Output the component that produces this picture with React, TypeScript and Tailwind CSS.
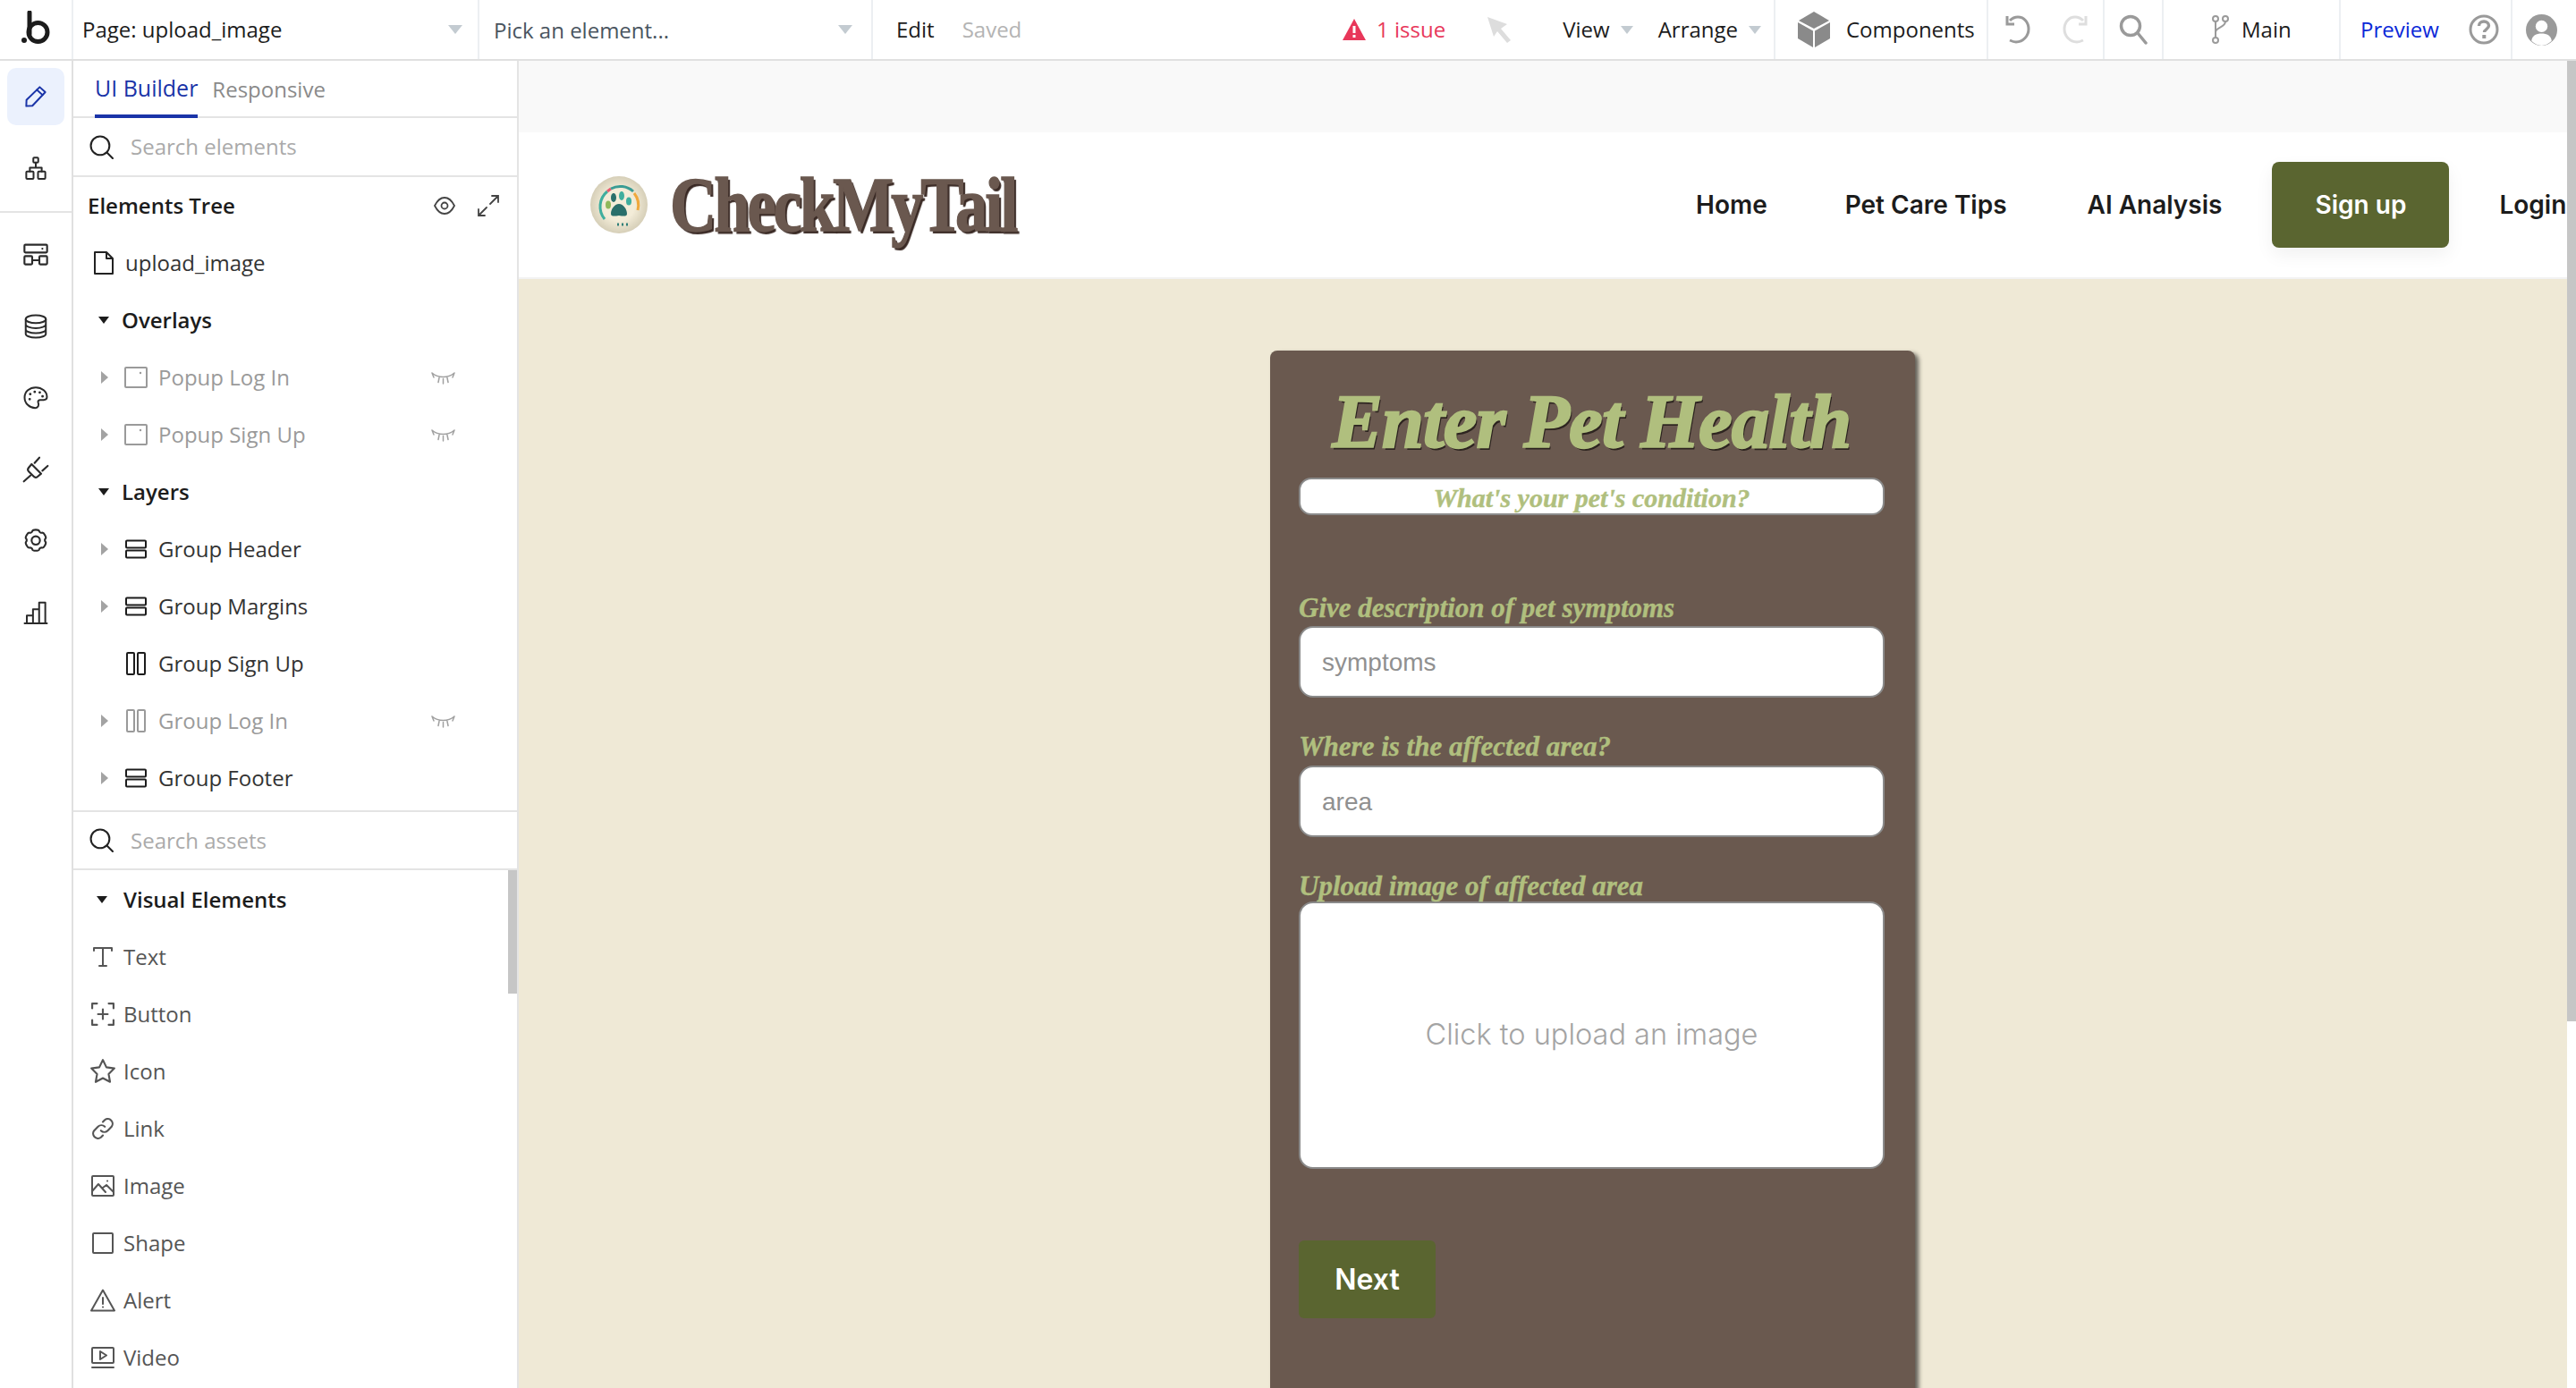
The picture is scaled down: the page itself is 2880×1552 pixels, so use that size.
import type { ReactNode } from 'react';

const stroke = { fill: 'none', stroke: 'currentColor', strokeWidth: 1.6, strokeLinecap: 'round', strokeLinejoin: 'round' } as const;

function Ico({ size = 28, w, h, children, className = '' }: { size?: number; w?: number; h?: number; children: ReactNode; className?: string }) {
  return (
    <svg width={w ?? size} height={h ?? size} viewBox="0 0 24 24" {...stroke} className={`flex-none ${className}`}>
      {children}
    </svg>
  );
}

function Caret({ className = 'text-[#c3cbd1]' }: { className?: string }) {
  return (
    <svg width="16" height="10" viewBox="0 0 16 10" className={`flex-none ${className}`}>
      <path d="M0 0h16L8 10z" fill="currentColor" />
    </svg>
  );
}

function TreeCaret({ open }: { open?: boolean }) {
  if (open) {
    return (
      <svg width="12" height="8" viewBox="0 0 12 8" className="flex-none text-[#1c1c1c]">
        <path d="M0 0h12L6 8z" fill="currentColor" />
      </svg>
    );
  }
  return (
    <svg width="8" height="14" viewBox="0 0 8 14" className="ml-[2px] mr-[2px] flex-none text-[#a3a3a3]">
      <path d="M0 0l8 7-8 7z" fill="currentColor" />
    </svg>
  );
}

function Search({ className = '' }: { className?: string }) {
  return (
    <svg width="27" height="27" viewBox="0 0 26 26" fill="none" stroke="currentColor" strokeWidth="2" strokeLinecap="round" className={`flex-none ${className}`}>
      <circle cx="11.5" cy="11.5" r="10" />
      <path d="M19 19l6 6" />
    </svg>
  );
}

function EyeClosed() {
  return (
    <svg width="27" height="16" viewBox="0 0 27 16" fill="none" stroke="#a0a0a0" strokeWidth="1.500" strokeLinecap="round">
      <path d="M1 3c7 6 18 6 25 0M1 3l2 5M26 3l-2 5M9 8.500l-1 5M13.500 9.500v5.500M18 8.500l1 5" />
    </svg>
  );
}

function PopupIcon() {
  return (
    <svg width="26" height="24" viewBox="0 0 26 24" fill="none" className="flex-none text-[#9a9a9a]">
      <rect x="1" y="1" width="24" height="22" rx="1" stroke="currentColor" strokeWidth="2" />
      <circle cx="18" cy="7" r="1.200" fill="currentColor" />
    </svg>
  );
}

function RowsIcon() {
  return (
    <svg width="26" height="22" viewBox="0 0 26 22" fill="none" stroke="#1c1c1c" strokeWidth="2" className="flex-none">
      <rect x="2" y="1.500" width="22" height="8" rx="1" />
      <rect x="2" y="12.500" width="22" height="8" rx="1" />
    </svg>
  );
}

function ColsIcon({ muted }: { muted?: boolean }) {
  return (
    <svg width="26" height="26" viewBox="0 0 26 26" fill="none" stroke={muted ? '#9a9a9a' : '#1c1c1c'} strokeWidth="2" className="flex-none">
      <rect x="3" y="1" width="8" height="24" rx="1" />
      <rect x="15" y="1" width="8" height="24" rx="1" />
    </svg>
  );
}

function RailButton({ active, children }: { active?: boolean; children: ReactNode }) {
  return (
    <div className={`flex h-[64px] w-[64px] items-center justify-center rounded-[10px] ${active ? 'bg-[#ebf1fd] text-[#1a34a8]' : 'text-[#2b2b2b]'}`}>
      {children}
    </div>
  );
}

function LeftRail() {
  return (
    <aside className="flex w-[82px] flex-none flex-col items-center border-r-2 border-[#e0e0e0] bg-white">
      <div className="flex h-[170px] w-full flex-none flex-col items-center gap-[16px] border-b-2 border-[#e4e4e4] pt-[8px]">
        <RailButton active>
          <Ico size={30}>
            <path d="M3.500 20.500l.2-5.500L15.500 3.500l5 4.500L9 20.200z" />
            <path d="M13 6l5 4.500" />
          </Ico>
        </RailButton>
        <RailButton>
          <Ico size={30}>
            <rect x="9.800" y="2.500" width="4.400" height="4.500" rx=".8" />
            <rect x="3.500" y="15" width="6.500" height="6.500" rx=".8" />
            <rect x="14" y="15" width="6.500" height="6.500" rx=".8" />
            <path d="M12 7v4.500M6.700 15v-3.500h10.600V15" />
          </Ico>
        </RailButton>
      </div>
      <div className="flex flex-col items-center">
        <div className="flex h-[80px] items-center pt-[14px] text-[#2b2b2b]">
          <Ico size={32}>
            <rect x="2.500" y="3.500" width="19" height="6.500" rx=".8" />
            <rect x="2.500" y="13" width="6.500" height="7" rx=".8" />
            <rect x="15" y="13" width="6.500" height="7" rx=".8" />
            <path d="M9 16.500h6M17.500 6.800h.1" />
          </Ico>
        </div>
        <div className="flex h-[80px] items-center pt-[14px] text-[#2b2b2b]">
          <Ico size={30}>
            <ellipse cx="12" cy="5.500" rx="9" ry="3.500" />
            <path d="M3 5.500v13c0 2 4 3.500 9 3.500s9-1.500 9-3.500v-13M3 10c0 2 4 3.500 9 3.500s9-1.500 9-3.500M3 14.500c0 2 4 3.500 9 3.500s9-1.500 9-3.500" />
          </Ico>
        </div>
        <div className="flex h-[80px] items-center pt-[14px] text-[#2b2b2b]">
          <Ico size={30}>
            <path d="M12 2.500c5.500 0 10 3.800 10 8.500 0 1.800-1.400 2.700-3 2.700h-3c-1.500 0-2.400 1.300-1.800 2.600.8 1.900.1 4.700-2.700 4.700C6.500 21 2 16.800 2 11.500s4.500-9 10-9z" />
            <path d="M7 8.500h.1M11 6.500h.1M15.500 7h.1M18 10.500h.1M6.500 13h.1" strokeWidth="2.200" />
          </Ico>
        </div>
        <div className="flex h-[80px] items-center pt-[14px] text-[#2b2b2b]">
          <Ico size={32}>
            <path d="M8.500 7.500l8 8-3 2.500c-1 .8-2.300.8-3.200-.1l-4.200-4.200c-.9-.9-.9-2.200-.1-3.200z" />
            <path d="M2 22l5.500-5M15 2l-4 4.500M22 9l-4.500 4" />
          </Ico>
        </div>
        <div className="flex h-[80px] items-center pt-[14px] text-[#2b2b2b]">
          <Ico size={32}>
            <path d="M9.200 3.500c.4-1.300 5.200-1.300 5.600 0 .3 1.100 1.500 1.800 2.600 1.500 1.300-.3 3.700 3.800 2.800 4.800-.8.800-.8 2.200 0 3 .9 1 -1.500 5.100-2.800 4.800-1.100-.3-2.300.4-2.600 1.500-.4 1.300-5.200 1.300-5.600 0-.3-1.100-1.500-1.800-2.600-1.500-1.300.3-3.700-3.800-2.800-4.800.8-.8.8-2.200 0-3-.9-1 1.500-5.100 2.800-4.800 1.100.3 2.300-.4 2.600-1.500z" />
            <circle cx="12" cy="11.500" r="3.500" />
          </Ico>
        </div>
        <div className="flex h-[80px] items-center pt-[14px] text-[#2b2b2b]">
          <Ico size={30}>
            <path d="M2 21.500h20M4 21.500v-7h5.500v7M9.500 21.500V9h5.500v12.500M15 21.500V3h5.500v18.500" />
          </Ico>
        </div>
      </div>
    </aside>
  );
}

function SmallCaret() {
  return (
    <svg width="14" height="9" viewBox="0 0 14 9" className="flex-none text-[#c3cbd1]">
      <path d="M0 0h14L7 9z" fill="currentColor" />
    </svg>
  );
}

function TopBar() {
  return (
    <header className="flex h-[68px] flex-none items-stretch border-b-2 border-[#e0e0e0] bg-white text-[24px]">
      <div className="flex w-[82px] flex-none items-center justify-center border-r-2 border-[#eceff2] pb-[4px]">
        <svg width="32" height="38" viewBox="0 0 32 38" fill="none">
          <circle cx="3" cy="33" r="3" fill="#1c1c1c" />
          <path d="M9 2v24" stroke="#1c1c1c" strokeWidth="5" strokeLinecap="round" />
          <circle cx="18.500" cy="24" r="10.500" stroke="#1c1c1c" strokeWidth="5" />
        </svg>
      </div>
      <div className="flex w-[454px] flex-none items-center border-r-2 border-[#eceff2] pl-[10px] pr-[17px] text-[#1c1c1c]">
        <span>Page: upload_image</span>
        <span className="ml-auto"><Caret /></span>
      </div>
      <div className="flex w-[440px] flex-none items-center border-r-2 border-[#eceff2] pl-[16px] pr-[21px] text-[#4a5560]">
        <span className="pt-[2px]">Pick an element...</span>
        <span className="ml-auto"><Caret /></span>
      </div>
      <div className="flex w-[1009px] flex-none items-center border-r-2 border-[#eceff2] pl-[26px] pr-[14px]">
        <span className="text-[#1c1c1c]">Edit</span>
        <span className="ml-[31px] text-[#b4b4b4]">Saved</span>
        <svg width="26" height="24" viewBox="0 0 26 24" className="ml-auto flex-none">
          <path d="M13 0l13 24H0z" fill="#e8375a" />
          <rect x="11.500" y="8" width="3" height="8" fill="#fff" />
          <rect x="11.500" y="18" width="3" height="3" fill="#fff" />
        </svg>
        <span className="ml-[12px] text-[#e8375a]">1 issue</span>
        <svg width="30" height="30" viewBox="0 0 30 30" className="ml-[46px] flex-none">
          <path d="M1 1l22 8-7 5 11 13-4 3-11-13-4 6z" fill="#dddddd" />
        </svg>
        <span className="ml-[55px] text-[#1c1c1c]">View</span>
        <span className="ml-[12px]"><SmallCaret /></span>
        <span className="ml-[28px] text-[#1c1c1c]">Arrange</span>
        <span className="ml-[12px]"><SmallCaret /></span>
      </div>
      <div className="flex w-[238px] flex-none items-center border-r-2 border-[#eceff2] pl-[25px]">
        <svg width="36" height="40" viewBox="0 0 36 40" className="flex-none">
          <path d="M18 0l17 10-17 9L1 10z" fill="#8a8a8a" />
          <path d="M0 12l17 9.500V40L0 30z" fill="#8a8a8a" />
          <path d="M36 12l-17 9.500V40l17-10z" fill="#8a8a8a" />
        </svg>
        <span className="ml-[18px] text-[#1c1c1c]">Components</span>
      </div>
      <div className="flex w-[130px] flex-none items-center border-r-2 border-[#eceff2] pl-[18px]">
        <svg width="30" height="32" viewBox="0 0 30 32" fill="none" stroke="#9a9a9a" strokeWidth="3" className="flex-none">
          <path d="M6 6c2-2 5-4 9-4 7 0 12 6 12 13.500S21 30 13 30c-3 0-5-1-7-2" />
          <path d="M3 1v9h8" />
        </svg>
        <svg width="30" height="32" viewBox="0 0 30 32" fill="none" stroke="#dedede" strokeWidth="3" className="ml-[34px] flex-none">
          <path d="M24 6c-2-2-5-4-9-4C8 2 3 8 3 15.500S9 30 17 30c3 0 5-1 7-2" />
          <path d="M27 1v9h-8" />
        </svg>
      </div>
      <div className="flex w-[66px] flex-none items-center border-r-2 border-[#eceff2] pl-[16px]">
        <svg width="32" height="34" viewBox="0 0 32 34" fill="none" stroke="#9a9a9a" strokeWidth="3.500" strokeLinecap="round" className="flex-none">
          <circle cx="13" cy="13" r="10.500" />
          <path d="M21 21l9 11" />
        </svg>
      </div>
      <div className="flex w-[198px] flex-none items-center border-r-2 border-[#eceff2] pl-[53px]">
        <svg width="20" height="34" viewBox="0 0 20 34" fill="none" stroke="#9a9a9a" strokeWidth="2" className="flex-none">
          <circle cx="5" cy="5" r="3" />
          <circle cx="16" cy="5" r="3" />
          <circle cx="5" cy="29" r="3" />
          <path d="M5 8v18M16 8c0 7-11 6-11 12" />
        </svg>
        <span className="ml-[14px] text-[#1c1c1c]">Main</span>
      </div>
      <div className="flex w-[192px] flex-none items-center border-r-2 border-[#eceff2] pl-[22px]">
        <span className="text-[#0a28d8]">Preview</span>
        <svg width="34" height="34" viewBox="0 0 34 34" fill="none" className="ml-[33px] flex-none">
          <circle cx="17" cy="17" r="15" stroke="#9a9a9a" strokeWidth="3" />
          <path d="M11.500 13c0-3 2.500-5 5.500-5s5.500 2 5.500 4.800c0 3.700-5 3.700-5 7.200" stroke="#9a9a9a" strokeWidth="3.400" />
          <rect x="15.300" y="23" width="4" height="4" fill="#9a9a9a" />
        </svg>
      </div>
      <div className="flex flex-1 items-center pl-[15px]">
        <svg width="35" height="35" viewBox="0 0 34 34" className="flex-none">
          <circle cx="17" cy="17" r="17" fill="#9a9a9a" />
          <circle cx="17" cy="13" r="6.500" fill="#fff" />
          <path d="M6 29c1-6 5-8 11-8s10 2 11 8c-3 3-7 5-11 5s-8-2-11-5z" fill="#fff" />
        </svg>
      </div>
    </header>
  );
}

function TreeRow({ caret, icon, label, muted, hidden }: { caret?: boolean; icon: ReactNode; label: string; muted?: boolean; hidden?: boolean }) {
  return (
    <div className="flex h-[64px] flex-none items-center pl-[29px] pr-[69px]">
      <span className="w-[28px] flex-none">{caret && <TreeCaret />}</span>
      <span className="flex w-[26px] flex-none justify-center">{icon}</span>
      <span className={`ml-[12px] ${muted ? 'text-[#9a9a9a]' : 'text-[#333333]'}`}>{label}</span>
      {hidden && <span className="ml-auto"><EyeClosed /></span>}
    </div>
  );
}

function GroupRow({ label }: { label: string }) {
  return (
    <div className="flex h-[64px] flex-none items-center pl-[28px] font-semibold text-[#1c1c1c]">
      <TreeCaret open />
      <span className="ml-[14px]">{label}</span>
    </div>
  );
}

function AssetRow({ icon, label }: { icon: ReactNode; label: string }) {
  return (
    <div className="flex h-[64px] items-center pl-[18px] text-[#555555]">
      <span className="flex w-[30px] flex-none justify-center">{icon}</span>
      <span className="ml-[8px]">{label}</span>
    </div>
  );
}

function Panel() {
  const a = { fill: 'none', stroke: '#555555', strokeWidth: 2, strokeLinecap: 'round', strokeLinejoin: 'round' } as const;
  return (
    <section className="flex w-[498px] flex-none flex-col overflow-hidden border-r-2 border-[#e4e4e4] bg-white text-[24px]">
      <div className="flex h-[64px] flex-none items-stretch gap-[16px] border-b-2 border-[#e4e4e4] pl-[24px]">
        <div className="-mb-[2px] flex items-center border-b-4 border-[#1a34a8] pt-[2px] text-[25px] font-medium text-[#1a34a8]">UI Builder</div>
        <div className="flex items-center pt-[2px] text-[#8a8a8a]">Responsive</div>
      </div>
      <div className="flex h-[66px] flex-none items-center border-b-2 border-[#e4e4e4] pl-[18px] text-[#aaaaaa]">
        <Search className="text-[#222222]" />
        <span className="ml-[19px]">Search elements</span>
      </div>
      <div className="flex h-[64px] flex-none items-center pl-[16px] pr-[20px] font-semibold text-[#1c1c1c]">
        <span>Elements Tree</span>
        <svg width="24" height="20" viewBox="0 0 24 20" fill="none" stroke="#444444" strokeWidth="1.800" className="ml-auto">
          <path d="M1 10c3-6 7-9 11-9s8 3 11 9c-3 6-7 9-11 9s-8-3-11-9z" />
          <circle cx="12" cy="10" r="3.500" />
        </svg>
        <svg width="24" height="24" viewBox="0 0 24 24" fill="none" stroke="#444444" strokeWidth="1.800" strokeLinecap="round" className="ml-[25px]">
          <path d="M14 10l9-9M16 1h7v7M10 14l-9 9M1 16v7h7" />
        </svg>
      </div>
      <div className="flex h-[64px] flex-none items-center pl-[23px] text-[#333333]">
        <svg width="22" height="26" viewBox="0 0 22 26" fill="none" stroke="#222222" strokeWidth="2" strokeLinejoin="round" className="flex-none">
          <path d="M1 1h13l7 7v17H1zM14 1v7h7" />
        </svg>
        <span className="ml-[13px]">upload_image</span>
      </div>
      <GroupRow label="Overlays" />
      <TreeRow caret muted hidden icon={<PopupIcon />} label="Popup Log In" />
      <TreeRow caret muted hidden icon={<PopupIcon />} label="Popup Sign Up" />
      <GroupRow label="Layers" />
      <TreeRow caret icon={<RowsIcon />} label="Group Header" />
      <TreeRow caret icon={<RowsIcon />} label="Group Margins" />
      <TreeRow icon={<ColsIcon />} label="Group Sign Up" />
      <TreeRow caret muted hidden icon={<ColsIcon muted />} label="Group Log In" />
      <TreeRow caret icon={<RowsIcon />} label="Group Footer" />
      <div className="mt-[4px] flex h-[67px] flex-none items-center border-y-2 border-[#e4e4e4] pl-[18px] text-[#aaaaaa]">
        <Search className="text-[#222222]" />
        <span className="ml-[19px]">Search assets</span>
      </div>
      <div className="flex min-h-0 flex-1">
        <div className="min-w-0 flex-1">
          <div className="flex h-[65px] items-center pl-[26px] font-semibold text-[#1c1c1c]">
            <TreeCaret open />
            <span className="ml-[18px]">Visual Elements</span>
          </div>
          <AssetRow label="Text" icon={<svg width="24" height="24" viewBox="0 0 24 24" {...a}><path d="M2 5V2h20v3M12 2v20M8 22h8" /></svg>} />
          <AssetRow label="Button" icon={<svg width="26" height="26" viewBox="0 0 24 24" {...a}><path d="M1 6V1h5M18 1h5v5M23 18v5h-5M6 23H1v-5M12 7v10M7 12h10" /></svg>} />
          <AssetRow label="Icon" icon={<svg width="30" height="30" viewBox="0 0 28 28" {...a}><path d="M14 2l3.700 7.700 8.300 1.100-6 5.900 1.500 8.300-7.500-4-7.500 4L8 16.700 2 10.800l8.300-1.100z" /></svg>} />
          <AssetRow label="Link" icon={<svg width="26" height="26" viewBox="0 0 24 24" {...a}><path d="M10 14a5 5 0 0 0 7 0l4-4a5 5 0 0 0-7-7l-2 2" /><path d="M14 10a5 5 0 0 0-7 0l-4 4a5 5 0 0 0 7 7l2-2" /></svg>} />
          <AssetRow label="Image" icon={<svg width="26" height="24" viewBox="0 0 26 24" {...a}><rect x="1" y="1" width="24" height="22" rx="1" /><path d="M1 18l7-8 8 9M13 14l4-3 8 8M18 6.500h.1" /></svg>} />
          <AssetRow label="Shape" icon={<svg width="24" height="24" viewBox="0 0 24 24" {...a}><rect x="1" y="1" width="22" height="22" rx="1" /></svg>} />
          <AssetRow label="Alert" icon={<svg width="28" height="26" viewBox="0 0 28 26" {...a}><path d="M14 1.500L27 24.500H1zM14 10v7M14 20.500h.1" /></svg>} />
          <AssetRow label="Video" icon={<svg width="26" height="24" viewBox="0 0 26 24" {...a}><rect x="1" y="1" width="24" height="17" rx="1" /><path d="M10 5l7 4.500-7 4.500zM1 23h24" /></svg>} />
        </div>
        <div className="w-[10px] flex-none">
          <div className="h-[138px] bg-[#c6c6c6]" />
        </div>
      </div>
    </section>
  );
}

function LogoBadge() {
  return (
    <svg width="64" height="64" viewBox="0 0 64 64" className="flex-none">
      <defs>
        <radialGradient id="badge" cx="50%" cy="50%" r="50%">
          <stop offset="55%" stopColor="#f3ecd8" />
          <stop offset="100%" stopColor="#d6cfb8" />
        </radialGradient>
      </defs>
      <circle cx="32" cy="32" r="32" fill="url(#badge)" />
      <g fill="none" strokeWidth="3">
        <path d="M16 48A22 22 0 0 1 19 17" stroke="#3fae9e" />
        <path d="M19 17l4-3" stroke="#e85a70" />
        <path d="M23 14A22 22 0 0 1 48 17" stroke="#3a9c94" />
        <path d="M49 19A22 22 0 0 1 53 38" stroke="#f0a83c" />
        <path d="M30 54h14" stroke="#2f7f78" strokeDasharray="2 3" />
      </g>
      <path d="M32 31c5 0 9 6 9 11 0 3-3 3-9 2-6 1-9 1-9-2 0-5 4-11 9-11z" fill="#2a6f6b" />
      <ellipse cx="26" cy="24" rx="3" ry="5" fill="#2a6f6b" />
      <ellipse cx="35" cy="22" rx="3" ry="5" fill="#3fae9e" />
      <ellipse cx="43" cy="28" rx="3" ry="4.500" fill="#3fae9e" />
      <ellipse cx="20" cy="32" rx="3" ry="4.500" fill="#8fb85a" />
    </svg>
  );
}

function SiteHeader() {
  const item = 'flex-none font-semibold text-[#1c1c1c]';
  return (
    <div className="flex h-[164px] flex-none items-center border-b-2 border-[#f2f2f2] bg-white pl-[80px] font-['Inter',sans-serif] text-[28px]">
      <div className="flex w-[1236px] flex-none items-center">
        <LogoBadge />
        <span className="ml-[25px] origin-left scale-x-[0.84] font-['Liberation_Serif',serif] text-[86px] leading-none font-bold tracking-[-3.500px] text-[#6a584f] [-webkit-text-stroke:1.500px_#6a584f] [text-shadow:3px_3px_1px_#3a2a25]">CheckMyTail</span>
      </div>
      <span className={item}>Home</span>
      <span className={`ml-[87px] ${item}`}>Pet Care Tips</span>
      <span className={`ml-[90px] ${item}`}>AI Analysis</span>
      <div className="ml-[56px] flex h-[96px] w-[198px] flex-none items-center justify-center rounded-[8px] bg-[#5a6530] font-semibold text-white shadow-[0_8px_20px_rgba(0,0,0,0.06)]">Sign up</div>
      <span className={`ml-[56px] ${item}`}>Login</span>
    </div>
  );
}

const scriptLabel = "font-['Liberation_Serif',serif] font-bold italic text-[#b0bf7e]";

function FieldLabel({ children, className = '' }: { children: string; className?: string }) {
  return <div className={`text-[31px] leading-[40px] [-webkit-text-stroke:0.400px_#b0bf7e] ${scriptLabel} ${className}`}>{children}</div>;
}

function TextField({ placeholder }: { placeholder: string }) {
  return (
    <div className="flex h-[80px] items-center rounded-[16px] border-2 border-[#8a8a8a] bg-white pt-[2px] pl-[24px] font-['Liberation_Sans',sans-serif] text-[28px] text-[#909090]">
      {placeholder}
    </div>
  );
}

function HealthCard() {
  return (
    <div className="h-[1200px] w-[721px] flex-none rounded-[8px] bg-[#6a594f] pt-[33px] pr-[34px] pl-[32px] shadow-[4px_3px_5px_rgba(0,0,0,0.6)]">
      <h1 className="text-center font-['Liberation_Serif',serif] text-[84px] leading-[94px] font-bold tracking-[-0.500px] text-[#b0bf7e] italic [-webkit-text-stroke:2.500px_#b0bf7e] [text-shadow:2px_3px_0_#2d2420]">Enter Pet Health</h1>
      <div className="mt-[15px] flex h-[42px] items-center justify-center rounded-[14px] border-2 border-[#8a8a8a] bg-white pt-[3px] text-[30px] leading-none [-webkit-text-stroke:0.400px_#b0bf7e]">
        <span className={scriptLabel}>What's your pet's condition?</span>
      </div>
      <FieldLabel className="mt-[84px]">Give description of pet symptoms</FieldLabel>
      <TextField placeholder="symptoms" />
      <FieldLabel className="mt-[35px] mb-[1px]">Where is the affected area?</FieldLabel>
      <TextField placeholder="area" />
      <FieldLabel className="mt-[35px] -mb-[3px]">Upload image of affected area</FieldLabel>
      <div className="flex h-[299px] items-center justify-center rounded-[16px] border-2 border-[#8a8a8a] bg-white font-['Inter',sans-serif] text-[32.500px] font-light text-[#a4a4a4]">
        Click to upload an image
      </div>
      <div className="mt-[80px] flex h-[87px] w-[153px] items-center justify-center rounded-[6px] bg-[#5a6530] font-['Inter',sans-serif] text-[32px] font-semibold text-white">
        Next
      </div>
    </div>
  );
}

function Canvas() {
  return (
    <main className="flex min-w-0 flex-1 overflow-hidden">
      <div className="flex min-w-0 flex-1 flex-col overflow-hidden">
        <div className="h-[80px] flex-none bg-[#f9f9f9]" />
        <SiteHeader />
        <div className="min-h-0 flex-1 bg-[#efe9d6] pt-[80px] pl-[840px]">
          <HealthCard />
        </div>
      </div>
      <div className="w-[10px] flex-none bg-white">
        <div className="h-[1074px] bg-[#c6c6c6]" />
      </div>
    </main>
  );
}

export default function App() {
  return (
    <div className="flex h-[1552px] w-[2880px] flex-col overflow-hidden bg-white font-['Open_Sans',sans-serif]">
      <TopBar />
      <div className="flex min-h-0 flex-1">
        <LeftRail />
        <Panel />
        <Canvas />
      </div>
    </div>
  );
}
